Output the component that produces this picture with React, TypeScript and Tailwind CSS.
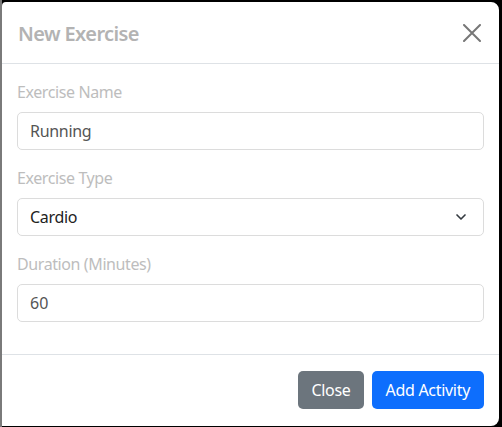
import { ChevronDown } from 'lucide-react'

const font = { fontFamily: '"Segoe UI", "Noto Sans", "Open Sans", sans-serif' }

export default function App() {
  return (
    <div
      className="w-[502px] h-[427px] bg-black border-l-2 border-[#7a7a7a] pt-[2px] pr-[3px] pb-[1px] overflow-hidden"
      style={font}
    >
      <div className="bg-white h-full rounded-r-lg rounded-tl-sm flex flex-col">
        {/* Header */}
        <div className="flex items-center justify-between pl-4 pr-[15px] h-[62px] border-b border-[#dee2e6]">
          <h5 className="text-[20px] font-semibold text-[#b3b3b3] leading-[30px] tracking-[-0.6px] mt-[2px]">
            New Exercise
          </h5>
          <button className="w-6 h-6 flex items-center justify-center">
            <svg width="18" height="18" viewBox="0 0 18 18">
              <path d="M1 1 L17 17 M17 1 L1 17" stroke="#777" strokeWidth="2" strokeLinecap="round" />
            </svg>
          </button>
        </div>

        {/* Body */}
        <div className="px-[15px] pt-4 pb-4 flex flex-col">
          <div className="mb-4">
            <label className="block text-[16px] leading-6 text-[#bdbdbd] mb-2 tracking-[-0.4px]">Exercise Name</label>
            <input
              defaultValue="Running"
              className="w-full h-[38px] px-3 text-[16px] text-[#555] border border-[#dcdcdc] rounded-[5px] outline-none tracking-[-0.3px]"
            />
          </div>
          <div className="mb-4">
            <label className="block text-[16px] leading-6 text-[#bdbdbd] mb-2 tracking-[-0.4px]">Exercise Type</label>
            <div className="w-full h-[38px] px-3 flex items-center justify-between border border-[#dcdcdc] rounded-[5px]">
              <span className="text-[16px] text-[#222] tracking-[-0.3px]">Cardio</span>
              <ChevronDown size={16} strokeWidth={2.5} className="text-[#343a40] mr-[2px]" />
            </div>
          </div>
          <div className="mb-4">
            <label className="block text-[16px] leading-6 text-[#bdbdbd] mb-2 tracking-[-0.4px]">Duration (Minutes)</label>
            <input
              defaultValue="60"
              className="w-full h-[38px] px-3 text-[16px] text-[#555] border border-[#dcdcdc] rounded-[5px] outline-none"
            />
          </div>
        </div>

        {/* Footer */}
        <div className="border-t border-[#dee2e6] flex justify-end items-center gap-2 px-[15px] pt-4">
          <button className="h-[38px] px-[13px] bg-[#6c757d] text-white text-[16px] rounded-[5px] tracking-[-0.3px]">
            Close
          </button>
          <button className="h-[38px] px-[14px] bg-[#0d6efd] text-white text-[16px] rounded-[5px] tracking-[-0.3px]">
            Add Activity
          </button>
        </div>
      </div>
    </div>
  )
}
